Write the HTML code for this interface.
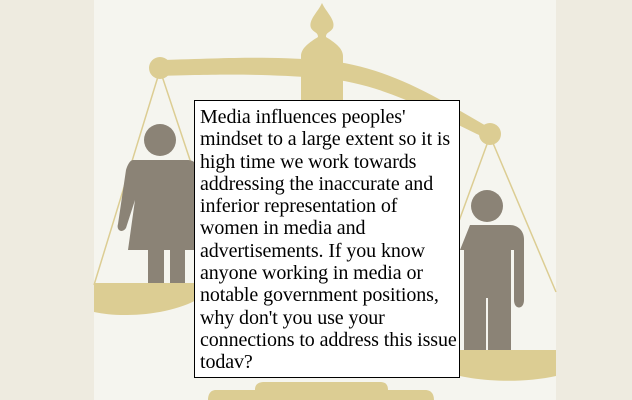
<!DOCTYPE html>
<html><head><style>
html,body{margin:0;padding:0;width:632px;height:400px;overflow:hidden;background:#eeebe0}
#txt{position:absolute;left:194px;top:100px;background:#fff;border:1.5px solid #000;font-family:"Liberation Serif",serif;font-size:20px;line-height:22.3px;color:#000;padding:5px 0 0 5px;box-sizing:border-box;width:266px;height:278px;white-space:nowrap;letter-spacing:-0.1px}
</style></head><body>
<svg width="632" height="400" style="position:absolute;left:0;top:0">
<rect x="94" y="0" width="462" height="400" fill="#f5f5ef"/>
<g fill="#dccd93">
<path d="M322 3 C326 12 336 20 333 28 C330 33 326 32 326 37 C334 42 343 48 343 56 L343 110 L301 110 L301 56 C301 48 310 42 318 37 C318 32 314 33 311 28 C308 20 318 12 322 3Z"/>
<path d="M160 60 C230 58 260 56 322 60 C390 66 440 100 490 128 L490 140 C440 118 390 84 322 78 C260 74 230 74 160 76Z"/>
<circle cx="160" cy="68" r="11"/>
<circle cx="490" cy="134" r="11"/>
<path d="M94 283 L200 283 L200 298 C170 316 120 318 94 312Z"/>
<path d="M440 350 L556 350 L556 376 C520 384 470 382 440 370Z"/>
<path d="M255 390 C255 383 260 382 265 382 L380 382 C385 382 388 384 388 390 L425 390 C432 390 434 395 434 400 L208 400 C208 395 210 390 216 390Z"/>
</g>
<g stroke="#dccd93" stroke-width="1.5" fill="none">
<path d="M160 70 L94 285 M160 70 L200 190"/>
<path d="M490 136 L455 232 M490 136 L556 292"/>
</g>
<g fill="#8b8376">
<circle cx="160" cy="140" r="16"/>
<path d="M133 160 L187 160 C195 160 198 165 200 172 L200 250 L185 250 L185 283 L170 283 L170 250 L164 250 L164 283 L148 283 L148 250 L128 250 L135 200 L126 228 C122 234 116 230 118 224 L126 170 C128 163 131 160 133 160Z"/>
<circle cx="487" cy="206" r="16"/>
<path d="M470 225 L510 225 C518 225 524 231 524 239 L524 300 C524 310 514 310 514 300 L514 250 L511 250 L511 350 L488 350 L488 298 L486 298 L486 350 L464 350 L464 250 L460 250 Z"/>
</g>
</svg>
<div id="txt">Media influences peoples'<br>mindset to a large extent so it is<br>high time we work towards<br>addressing the inaccurate and<br>inferior representation of<br>women in media and<br>advertisements. If you know<br>anyone working in media or<br>notable government positions,<br>why don't you use your<br>connections to address this issue<br>todav?</div>
</body></html>
